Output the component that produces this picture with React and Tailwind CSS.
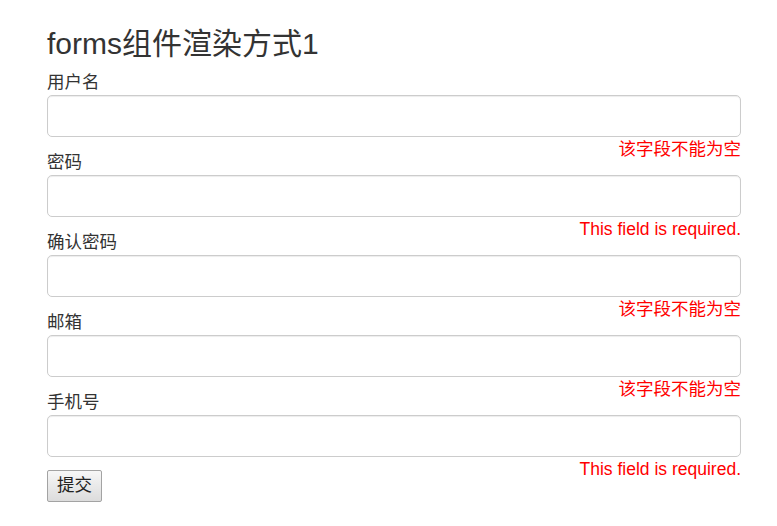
import React from 'react';

const fields = [
  { label: '用户名', error: '该字段不能为空' },
  { label: '密码', error: 'This field is required.' },
  { label: '确认密码', error: '该字段不能为空' },
  { label: '邮箱', error: '该字段不能为空' },
  { label: '手机号', error: 'This field is required.' },
];

const App = () => {
  const s = {
    page: `min-h-screen bg-white text-[#333] px-[47px] pr-[36px] font-['Liberation_Sans','Noto_Sans_CJK_SC',sans-serif]`,
    input: `block w-full h-[42px] mt-[1px] rounded-[5px] border border-[#ccc] bg-white shadow-[inset_0_1px_1px_rgba(0,0,0,0.075)] outline-none px-3`,
  }

  return (
    <div className={s.page}>
      <h3 className="pt-[27px] mb-[9px] text-[30px] leading-[33px] font-normal">forms组件渲染方式1</h3>

      <form onSubmit={(e) => e.preventDefault()}>
        {fields.map((f) => (
          <div key={f.label} className="flex flex-col">
            <label className="h-[25px] text-[17.5px] leading-[27px]">{f.label}</label>
            <input className={s.input} type="text" />
            <div className="relative h-[12px]">
              <span className="absolute right-0 top-0 whitespace-nowrap text-[17.5px] leading-[24px] text-[#ff0000]">{f.error}</span>
            </div>
          </div>
        ))}

        <button
          type="submit"
          className="mt-[1px] w-[55px] h-[32px] border border-[#a3a3a3] rounded-[2px] bg-gradient-to-b from-[#f7f7f7] to-[#dcdcdc] text-[17.5px] leading-none text-[#222]"
        >
          提交
        </button>
      </form>
    </div>
  )
}

export default App;
